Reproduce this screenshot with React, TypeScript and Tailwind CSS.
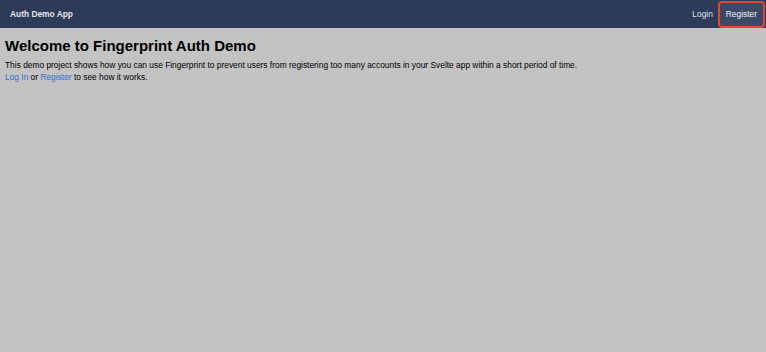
export default function App() {
  return (
    <div className="min-h-[352px] w-full bg-[#c3c3c3] font-['Liberation_Sans',sans-serif]">
      <nav className="h-[28px] bg-[#2e3b58] flex items-center justify-between pl-[10px]">
        <span className="text-[8.4px] font-bold text-[#e2e4ea]">Auth Demo App</span>
        <div className="flex items-center h-full">
          <a className="text-[8.4px] text-[#dfe2e8] mr-[5px]">Login</a>
          <a className="h-[27px] mr-[1px] px-[6px] flex items-center rounded-[4px] border-2 border-[#e5452c] bg-[#3b4866] text-[8.4px] text-[#eef0f4]">
            Register
          </a>
        </div>
      </nav>
      <main className="px-[5px] pt-[8px]">
        <h1 className="text-[15px] font-bold text-black leading-[20px] mb-[3px]">
          Welcome to Fingerprint Auth Demo
        </h1>
        <p className="text-[8.4px] leading-[12px] text-black">
          This demo project shows how you can use Fingerprint to prevent users from registering too many accounts in your Svelte app within a short period of time.
        </p>
        <p className="text-[8.4px] leading-[12px] text-black">
          <a className="text-[#2f6fcf]">Log In</a> or <a className="text-[#2f6fcf]">Register</a> to see how it works.
        </p>
      </main>
    </div>
  )
}
